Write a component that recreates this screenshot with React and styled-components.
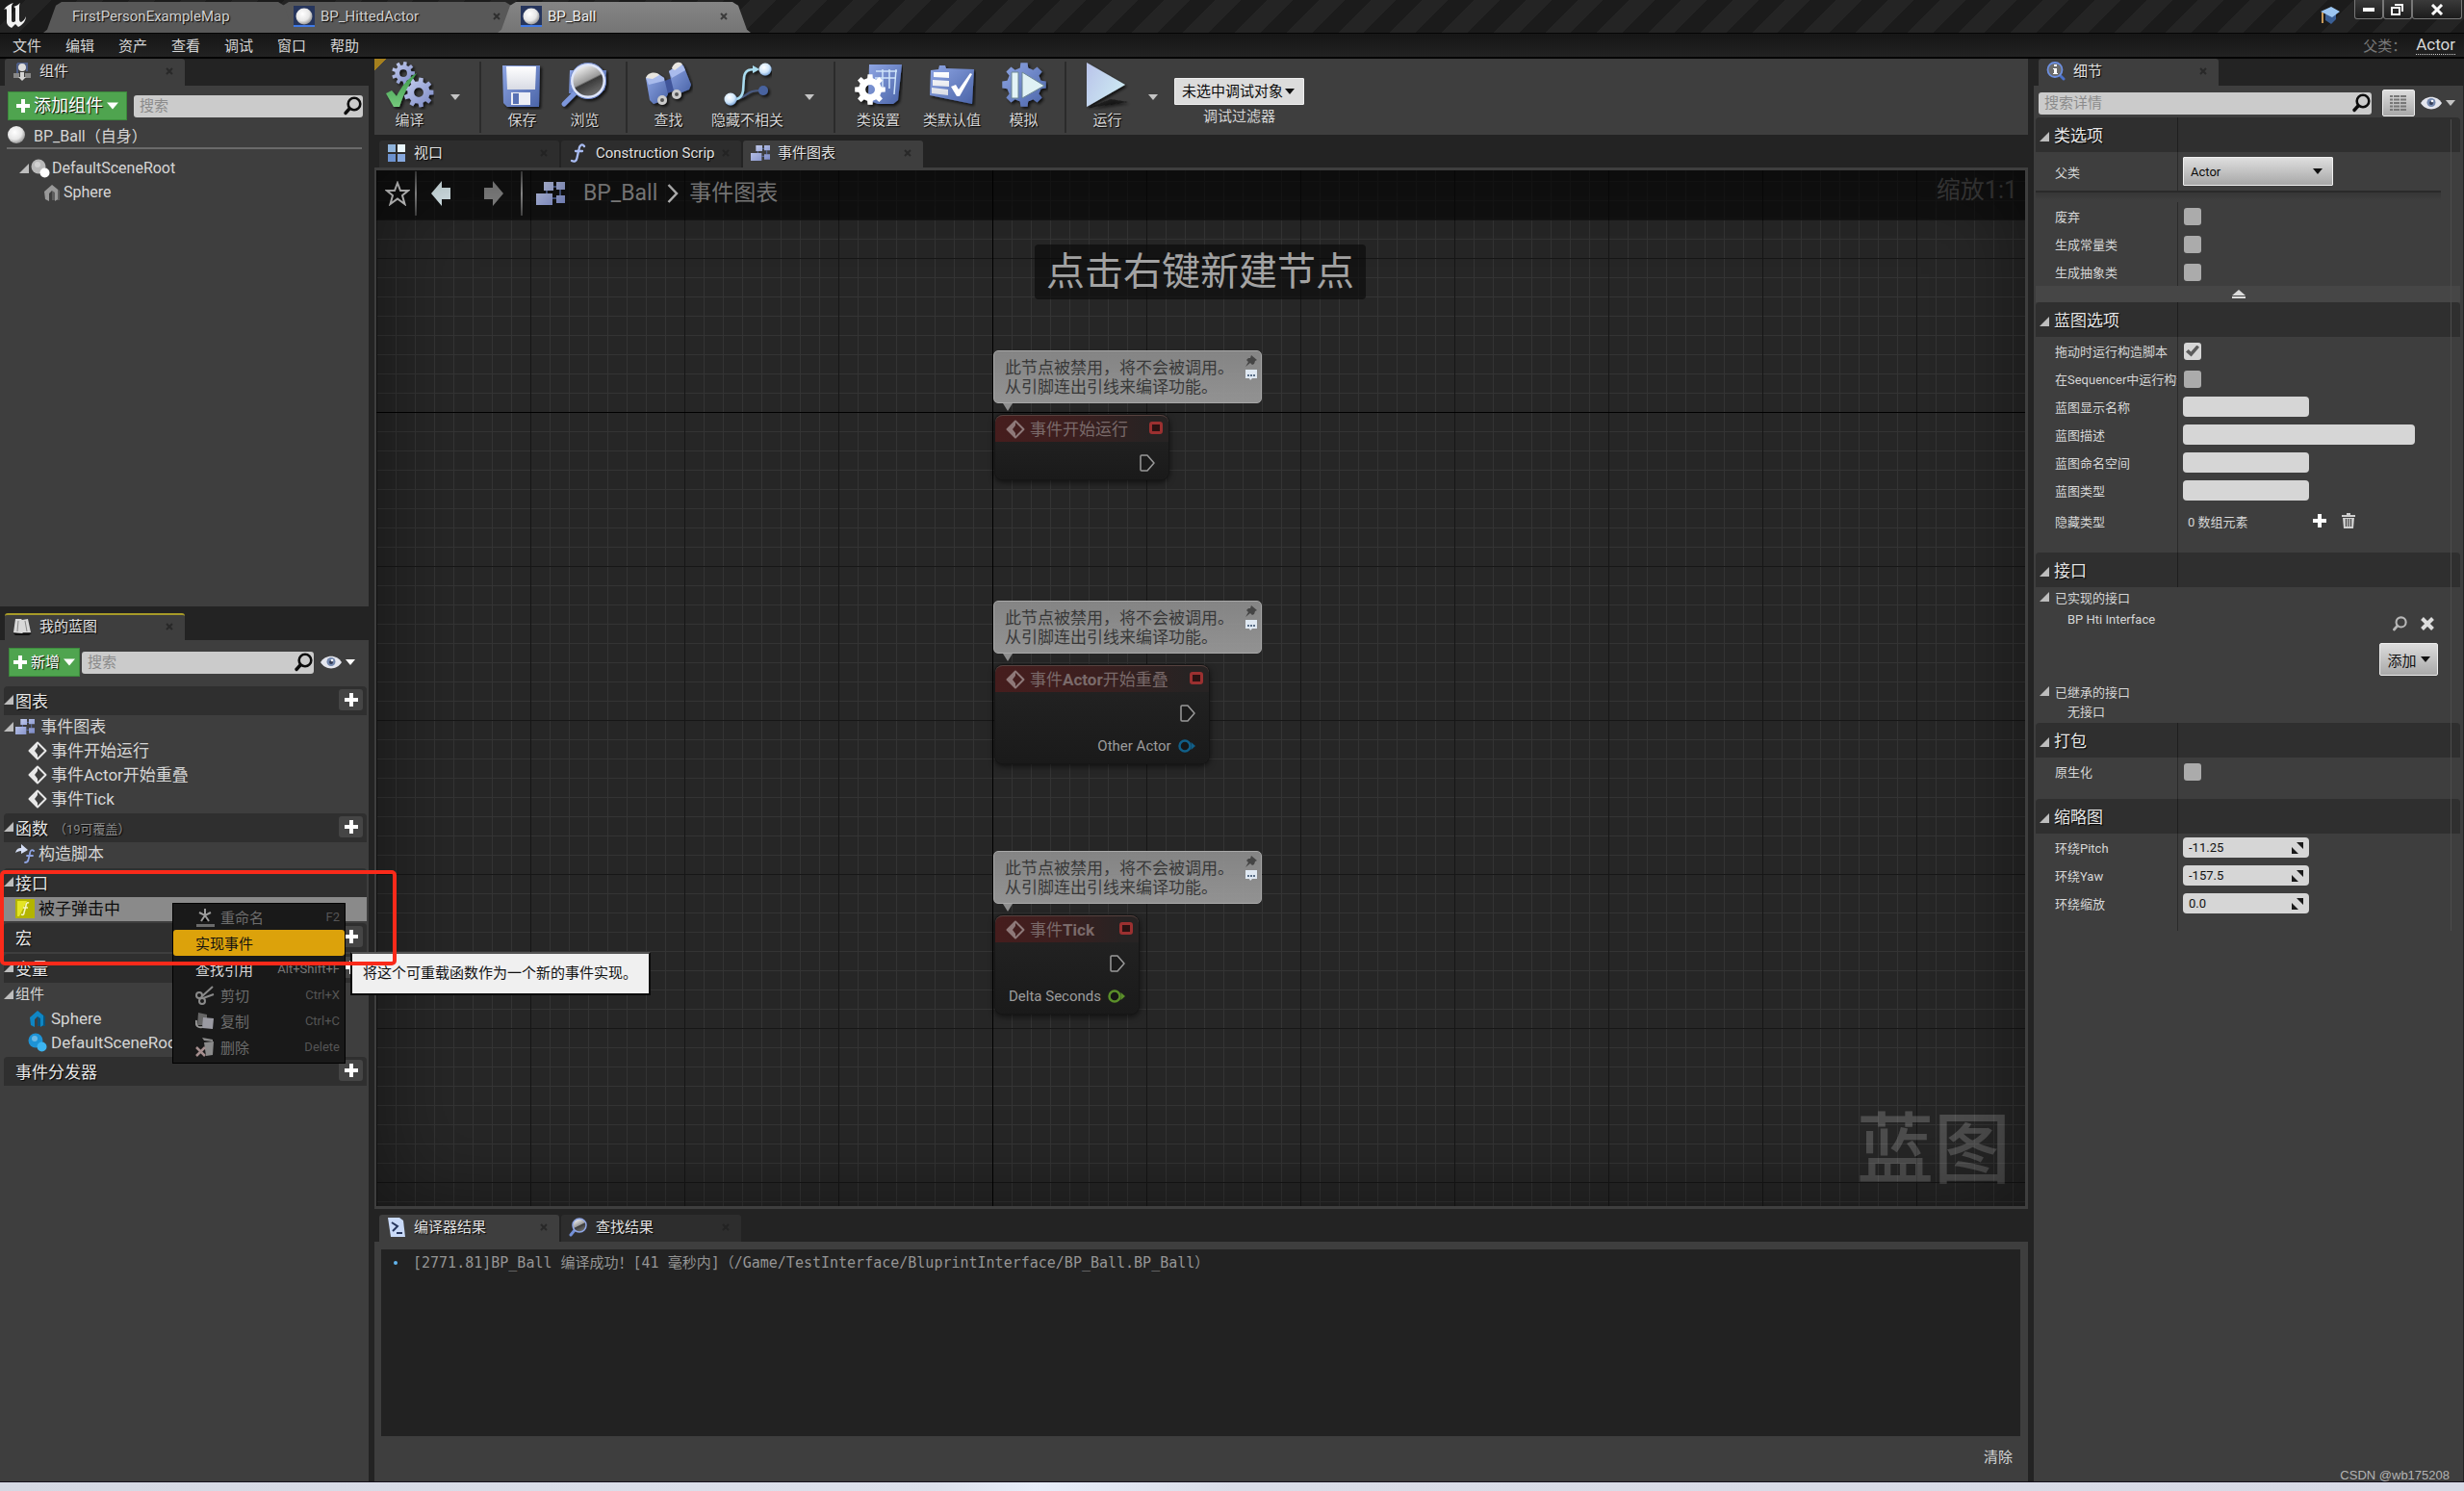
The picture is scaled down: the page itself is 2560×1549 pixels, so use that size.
import React from "react";
import styled, { createGlobalStyle, css } from "styled-components";

const color = {
  gutter: "#232323",
  panel: "#3e3e3e",
  header: "#2f2f2f",
  text: "#d6d6d6",
  muted: "#8c8c8c",
  field: "#cbcbcb",
  green: "#4fa44f",
};
const shadow = "1px 1px 1px #000";

const GlobalStyle = createGlobalStyle`
  * { box-sizing: border-box; }
  body {
    margin: 0;
    background: ${color.gutter};
    color: ${color.text};
    font-family: Roboto, "Noto Sans CJK SC", sans-serif;
    font-size: 15px;
  }
  button, input, select { font: inherit; color: inherit; margin: 0; }
  button { border: 0; padding: 0; background: none; }
  h2, h3, p, ul { margin: 0; padding: 0; font-weight: 400; list-style: none; }
  svg { display: block; flex: none; }
`;

/* ---------- icons ---------- */

const HiddenSvg = styled.svg`
  position: absolute;
`;
const Defs = () => (
  <HiddenSvg width="0" height="0" aria-hidden="true">
    <defs>
      <linearGradient id="steel" x1="0" y1="0" x2="1" y2="1">
        <stop offset="0" stopColor="#c9d2f2" />
        <stop offset="1" stopColor="#7886c2" />
      </linearGradient>
      <linearGradient id="blue" x1="0" y1="0" x2="1" y2="1">
        <stop offset="0" stopColor="#8fa6e4" />
        <stop offset="1" stopColor="#4a64a8" />
      </linearGradient>
      <linearGradient id="ice" x1="0" y1="0" x2="1" y2="0.6">
        <stop offset="0" stopColor="#b9c3ea" />
        <stop offset="1" stopColor="#cdeaf2" />
      </linearGradient>
      <linearGradient id="leaf" x1="0" y1="0" x2="0" y2="1">
        <stop offset="0" stopColor="#3f9a4c" />
        <stop offset="1" stopColor="#74c97c" />
      </linearGradient>
      <linearGradient id="lens" x1="0.2" y1="0" x2="0.7" y2="1">
        <stop offset="0" stopColor="#ffffff" />
        <stop offset="0.5" stopColor="#9a9a9a" />
        <stop offset="0.55" stopColor="#3a3a3a" />
        <stop offset="1" stopColor="#777" />
      </linearGradient>
      <linearGradient id="paper" x1="0" y1="0" x2="0" y2="1">
        <stop offset="0" stopColor="#ffffff" />
        <stop offset="1" stopColor="#d8dbe4" />
      </linearGradient>
      <radialGradient id="ball" cx="0.4" cy="0.35" r="0.7">
        <stop offset="0" stopColor="#ffffff" />
        <stop offset="0.6" stopColor="#e6e6e6" />
        <stop offset="1" stopColor="#8a8a8a" />
      </radialGradient>
      <radialGradient id="node" cx="0.4" cy="0.35" r="0.7">
        <stop offset="0" stopColor="#ffffff" />
        <stop offset="0.6" stopColor="#cfe6fb" />
        <stop offset="1" stopColor="#6f9ad0" />
      </radialGradient>
      <filter id="drop" x="-20%" y="-20%" width="150%" height="150%">
        <feDropShadow dx="2" dy="2" stdDeviation="1.5" floodColor="#000" floodOpacity="0.75" />
      </filter>
    </defs>
  </HiddenSvg>
);

function gearPath(cx, cy, inner, outer, teeth) {
  const step = (Math.PI * 2) / teeth;
  const pts = [];
  for (let i = 0; i < teeth; i += 1) {
    const a = i * step;
    [[-0.3, inner], [-0.2, outer], [0.2, outer], [0.3, inner]].forEach(([k, r]) => {
      pts.push(`${(cx + r * Math.cos(a + k * step)).toFixed(2)} ${(cy + r * Math.sin(a + k * step)).toFixed(2)}`);
    });
  }
  return `M${pts.join("L")}Z`;
}
const ring = (cx, cy, r) => `M${cx - r} ${cy}a${r} ${r} 0 1 0 ${2 * r} 0a${r} ${r} 0 1 0 ${-2 * r} 0Z`;

const Big = ({ children }) => (
  <svg width="50" height="50" viewBox="0 0 50 50" aria-hidden="true"><g filter="url(#drop)">{children}</g></svg>
);

const CompileIcon = () => (
  <Big>
    <path fillRule="evenodd" fill="url(#steel)" d={gearPath(18, 12, 8.5, 12, 9) + ring(18, 12, 4)} />
    <path fillRule="evenodd" fill="url(#steel)" d={gearPath(34, 32, 11.5, 15.5, 9) + ring(34, 32, 5)} />
    <path fill="url(#leaf)" d="M0 33L6 30L11 36C16 26 23 17 32 12C24 23 18 34 14 47L8 47Z" />
  </Big>
);
const SaveIcon = () => (
  <Big>
    <path fill="url(#blue)" d="M4 4H43L42 47H9L5 43Z" />
    <path fill="url(#paper)" d="M8 5H39L38 29H9Z" />
    <path fill="#eceef5" d="M13 32H33V45H13Z" />
    <path fill="#5871b4" d="M15 33H21V44H15Z" />
  </Big>
);
const BrowseIcon = () => (
  <Big>
    <path fill="url(#blue)" d="M9 9H20V33H8ZM40 9H47L45 30H38Z" />
    <path stroke="#7d97dc" strokeWidth="5" strokeLinecap="round" d="M3 44L14 33" />
    <circle cx="28" cy="20" r="17" fill="url(#lens)" stroke="#dfe6fa" strokeWidth="3" />
    <circle cx="28" cy="20" r="18.5" fill="none" stroke="#6f88cc" strokeWidth="1" />
  </Big>
);
const FindIcon = () => (
  <Big>
    <path fill="#3f549a" d="M16 22L28 17L32 30L20 34Z" />
    <path fill="url(#blue)" d="M1 17L14 13L20 17L24 34L20 40L9 44L5 40Z" />
    <path fill="url(#blue)" d="M25 10L37 2L40 4L48 24L46 29L36 33L30 30Z" />
    <path fill="#a9bbec" d="M1 17L14 13L20 17L20 20L4 24ZM25 10L37 2L40 5L42 9L28 17Z" />
    <path fill="#e9e6e0" d="M1 17C3 11 12 10 15 14L8 18ZM28 7C30 0 37 -1 39 3L31 9Z" />
    <circle cx="18" cy="40" r="5" fill="#ccc" /><circle cx="18" cy="40" r="2" fill="#555" />
    <circle cx="33" cy="34" r="5" fill="#ccc" /><circle cx="33" cy="34" r="2" fill="#555" />
  </Big>
);
const HideIcon = () => (
  <Big>
    <path fill="none" stroke="#4a5a80" strokeWidth="2" d="M7 39C27 39 20 29 41 30" />
    <circle cx="41" cy="30" r="5" fill="#48639f" />
    <path fill="none" stroke="#a9dcf0" strokeWidth="2.5" d="M7 39C14 40 19 38 20 30L21 16C22 9 26 8 33 8" />
    <path fill="#a9dcf0" d="M30 4L37 8L30 12Z" />
    <circle cx="43" cy="8" r="6.5" fill="url(#node)" />
    <circle cx="7" cy="39" r="6.5" fill="url(#node)" />
  </Big>
);
const ClassSettingsIcon = () => (
  <Big>
    <path fill="url(#blue)" d="M15 3H49L45 40L40 44H24L14 40Z" />
    <path fill="none" stroke="#cfe4fa" strokeWidth="1.5" d="M22 10H44M21 17H43M29 8V26M36 8V28M43 8L41 34" />
    <path fillRule="evenodd" fill="#fff" d={gearPath(16, 29, 12, 16, 8) + ring(16, 29, 5)} />
  </Big>
);
const ClassDefaultsIcon = () => (
  <Big>
    <path fill="url(#blue)" d="M3 9L11 8L12 4H18L19 7L48 8L46 44L2 35Z" />
    <path fill="url(#paper)" d="M6 11L22 11V17L6 16ZM5 19L22 20V26L5 25ZM4 27L21 29V35L4 33Z" />
    <path fill="#fff" d="M24 26L29 24L32 29L44 12L46 13L33 36L30 36Z" />
  </Big>
);
const SimulateIcon = () => (
  <Big>
    <path fill="url(#blue)" d={gearPath(25, 24, 18, 23, 8)} />
    <path fill="#e3f3f6" stroke="#6d8793" d="M12 11H19V38H12Z" />
    <path fill="#dff1f5" stroke="#6d8793" d="M23 11L46 25L23 38Z" />
  </Big>
);
const PlayIcon = () => (
  <Big>
    <path fill="#111" opacity="0.7" d="M5 48L28 39L46 42Z" />
    <path fill="url(#ice)" d="M3 1L43 24L3 47Z" />
  </Big>
);

const Caret = ({ size = 10, fill = "#c4c4c4" }) => (
  <svg width={size} height={size} viewBox="0 0 10 10" aria-hidden="true"><path fill={fill} d="M0 2H10L5 8Z" /></svg>
);
const Plus = ({ size = 14 }) => (
  <svg width={size} height={size} viewBox="0 0 14 14" aria-hidden="true"><path fill="#fff" d="M5 0H9V5H14V9H9V14H5V9H0V5H5Z" /></svg>
);
const Search = ({ size = 20, fill = "#0c0c0c" }) => (
  <svg width={size} height={size} viewBox="0 0 20 20" aria-hidden="true">
    <circle cx="12" cy="8" r="6.3" fill="none" stroke={fill} strokeWidth="2.6" />
    <path stroke={fill} strokeWidth="3.4" strokeLinecap="round" d="M3 17.5L7 13" />
  </svg>
);
const Eye = () => (
  <svg width="22" height="14" viewBox="0 0 22 14" aria-hidden="true">
    <path fill="#e4e6ee" d="M0 7C5 -1.500 17 -1.500 22 7C17 15.500 5 15.500 0 7Z" />
    <circle cx="11" cy="6.500" r="4.500" fill="#7488ae" /><circle cx="11" cy="7" r="2" fill="#333c55" /><circle cx="12" cy="5" r="1.300" fill="#fff" />
  </svg>
);
const TreeArrow = () => (
  <svg width="10" height="10" viewBox="0 0 10 10" aria-hidden="true"><path fill="#bdbdbd" d="M10 0V10H0Z" /></svg>
);
const CloseX = () => (
  <svg width="8" height="8" viewBox="0 0 8 8" aria-hidden="true"><path stroke="#1f1f1f" strokeWidth="2" opacity="0.7" d="M1 1L7 7M7 1L1 7" /></svg>
);
const GraphIcon = ({ width = 20 }) => (
  <svg width={width} height={Math.round(width * 0.8)} viewBox="0 0 30 24" aria-hidden="true">
    <path stroke="#5b6da5" strokeWidth="1.500" d="M16 5H22M17 17H22M11 9V14M25 8V14" />
    <path fill="url(#steel)" d="M8 0H18V9H8ZM21 0H30V8H21ZM0 12H17V24H0ZM21 14H30V22H21Z" />
  </svg>
);
const EventIcon = ({ size = 20 }) => (
  <svg width={size} height={size} viewBox="0 0 20 20" aria-hidden="true">
    <path fill="none" stroke="#e8e8e8" strokeWidth="2" strokeLinejoin="round" d="M10 1.500L18.500 10L10 18.500L1.500 10Z" />
    <path fill="#e8e8e8" d="M10 1.500V6L7 10L10 14V18.500L1.500 10Z" />
  </svg>
);
const SphereIcon = ({ size = 20 }) => (
  <svg width={size} height={size} viewBox="0 0 20 20" aria-hidden="true"><circle cx="10" cy="10" r="9" fill="url(#ball)" /></svg>
);
const BlueprintTabIcon = () => (
  <svg width="22" height="22" viewBox="0 0 22 22" aria-hidden="true">
    <path fill="#26355c" d="M0 0H22V20H0Z" /><path fill="#3f79e6" d="M0 20H22V22H0Z" /><circle cx="11" cy="11" r="8.500" fill="url(#ball)" />
  </svg>
);
const RootIcon = ({ a = "#b9b9b9", b = "#fff" }) => (
  <svg width="20" height="20" viewBox="0 0 20 20" aria-hidden="true">
    <circle cx="8" cy="8" r="7.500" fill={a} /><circle cx="7" cy="6" r="3" fill="#fff" opacity="0.35" /><circle cx="14.500" cy="14.500" r="5" fill={b} />
  </svg>
);
const MeshIcon = ({ fill = "#999", dark = "#5d5d5d" }) => (
  <svg width="18" height="18" viewBox="0 0 18 18" aria-hidden="true">
    <path fill={dark} d="M9 1L17 7V17H9Z" /><path fill={fill} d="M1 8L9 1L15 6V16L12 18V9L9 7L6 10V18L2 16Z" />
  </svg>
);
const ComponentsIcon = () => (
  <svg width="20" height="20" viewBox="0 0 20 20" aria-hidden="true">
    <path fill="none" stroke="#4d5d86" strokeWidth="2" d="M5 2H15V10M5 2V12" />
    <circle cx="10" cy="6" r="4" fill="#ddd" /><path fill="#888" d="M1 12H7V17H1ZM13 12H19V17H13Z" /><path fill="#d5d5d5" d="M8 11H12V16H14L10 20L6 16H8Z" />
  </svg>
);
const BookIcon = () => (
  <svg width="20" height="20" viewBox="0 0 20 20" aria-hidden="true">
    <path fill="#111" d="M1 17H20L17 19H3Z" /><path fill="#d9d9d9" d="M3 2H9L10 3L16 2L19 16H11L10 17L1 16Z" /><path stroke="#888" d="M6 4L5 15M13 4L15 15" />
  </svg>
);
const ViewportIcon = () => (
  <svg width="20" height="20" viewBox="0 0 20 20" aria-hidden="true">
    <path fill="#8fb4dc" d="M1 1H9V9H1Z" /><path fill="#e9f6fc" d="M11 1H19V9H11Z" /><path fill="#6c92cf" d="M1 11H9V19H1Z" /><path fill="#86a8dd" d="M11 11H19V19H11Z" />
  </svg>
);
const FnIcon = ({ size = 20, stroke = "#a9bcf2" }) => (
  <svg width={size} height={size} viewBox="0 0 20 20" aria-hidden="true">
    <path fill="none" stroke={stroke} strokeWidth="2.300" strokeLinecap="round" d="M16 3C14 0 11 1.500 10.500 6L8.500 15C8 18 6 19.500 3 18M7 8H14" />
  </svg>
);
const ConstructIcon = () => (
  <svg width="20" height="20" viewBox="0 0 20 20" aria-hidden="true">
    <path fill="#d5def4" d="M0 9C1 5 3 4 6 4V0L13 6L6 10V7C3 7 2 8 0 9Z" />
    <path fill="none" stroke="#8ea3e0" strokeWidth="1.800" strokeLinecap="round" d="M19 7C17 5 15 7 15 10L13.500 16C13 19 11 19 10 19M12 12H18" />
  </svg>
);
const InterfaceIcon = () => (
  <svg width="20" height="20" viewBox="0 0 20 20" aria-hidden="true">
    <path fill="#b3b400" d="M0 0H20V20H0Z" /><path fill="#e4e526" d="M2 2H12L4 18H2Z" />
    <path fill="none" stroke="#f7f7c4" strokeWidth="1.600" d="M14 4C12 3 11 5 11 7L9 14C9 16 8 17 6 16M8 9H13" />
  </svg>
);
const ScriptIcon = () => (
  <svg width="20" height="20" viewBox="0 0 20 20" aria-hidden="true">
    <path fill="#c9daf8" d="M1 0H13L17 3L19 20H4Z" /><path fill="none" stroke="#26365e" strokeWidth="2" d="M5 5L11 9L6 14M10 16H16" />
  </svg>
);
const LensIcon = () => (
  <svg width="20" height="20" viewBox="0 0 20 20" aria-hidden="true">
    <path stroke="#7390d8" strokeWidth="3" strokeLinecap="round" d="M2 18L6 13" /><circle cx="11" cy="8" r="7" fill="url(#lens)" stroke="#8fa6e4" strokeWidth="1.500" />
  </svg>
);
const InfoIcon = () => (
  <svg width="20" height="20" viewBox="0 0 20 20" aria-hidden="true">
    <path stroke="#4b70c8" strokeWidth="3" strokeLinecap="round" d="M14 14L18 18" /><circle cx="9" cy="8.500" r="7.500" fill="#6b6b6b" stroke="#6c8fe0" strokeWidth="1.800" />
    <path fill="#fff" d="M8 3H11V5H8ZM7 7H11V12H12V13H7V12H8V8H7Z" />
  </svg>
);
const Logo = () => (
  <svg width="26" height="26" viewBox="0 0 26 26" aria-hidden="true">
    <path fill="#f2f2f2" d="M1 7C4 3 7 1 11 0C9 2 9 3 9 5V18C9 20 11 21 13 19V6C13 5 12 4 11 4C14 3 16 2 18 0C17 2 17 3 17 5V17C17 19 18 20 19 20C21 19 23 17 24 14C24 19 20 23 16 25L13 22L9 26C7 25 4 23 4 20V8C4 6 3 6 1 7Z" />
  </svg>
);
const CapIcon = () => (
  <svg width="20" height="18" viewBox="0 0 20 18" aria-hidden="true">
    <path fill="#3a5f95" d="M5 8V14L11 18L16 13V7Z" /><path fill="#9cc6f2" d="M0 5L11 0L20 5L12 11Z" /><path stroke="#c89a5a" strokeWidth="2" d="M2 6V17" />
  </svg>
);
const StarIcon = () => (
  <svg width="26" height="26" viewBox="0 0 26 26" aria-hidden="true"><path fill="none" stroke="#d8d8d8" strokeWidth="2" d="M13 2L16 10H24L18 15L20.500 24L13 18.500L5.500 24L8 15L2 10H10Z" /></svg>
);
const ChevronIcon = () => (
  <svg width="12" height="20" viewBox="0 0 12 20" aria-hidden="true"><path fill="none" stroke="#c4c4c4" strokeWidth="2.500" d="M1.500 1L10 10L1.500 19" /></svg>
);
const NavArrow = ({ flip, fill }) => (
  <svg width="22" height="28" viewBox="0 0 22 28" aria-hidden="true"><path fill={fill} transform={flip ? "translate(22 0) scale(-1 1)" : undefined} d="M0 14L11 1V8H20V20H11V27Z" /></svg>
);
const ExecPin = () => (
  <svg width="16" height="18" viewBox="0 0 16 18" aria-hidden="true"><path fill="#1a1a1a" stroke="#9a9a9a" strokeWidth="1.500" strokeLinejoin="round" d="M1 2Q1 1 2 1H8L15 9L8 17H2Q1 17 1 16Z" /></svg>
);
const ValuePin = ({ tint }) => (
  <svg width="18" height="14" viewBox="0 0 18 14" aria-hidden="true"><circle cx="7" cy="7" r="5.500" fill="#161616" stroke={tint} strokeWidth="2.500" /><path fill={tint} d="M13.500 3L18 7L13.500 11Z" /></svg>
);
const PushPin = () => (
  <svg width="12" height="12" viewBox="0 0 12 12" aria-hidden="true"><path fill="#454545" d="M6 0L12 5L10 6L9 9L7 10L5 8L0 12L3 7L1 5L3 3H5Z" /></svg>
);
const BubbleIcon = () => (
  <svg width="12" height="12" viewBox="0 0 12 12" aria-hidden="true"><path fill="#dfe8f2" d="M0 1H12V10H7L5 12L4 10H0Z" /><path fill="#5a6f88" d="M2 6H4V8H2ZM5 6H7V8H5ZM8 6H10V8H8Z" /></svg>
);
const TrashIcon = () => (
  <svg width="14" height="16" viewBox="0 0 14 16" aria-hidden="true"><path fill="#cfcfcf" d="M5 0H9V2H14V4H0V2H5ZM1 5H13L12 16H2Z" /><path stroke="#444" strokeWidth="1.200" d="M4.500 6V14M7 6V14M9.500 6V14" /></svg>
);
const RemoveIcon = () => (
  <svg width="14" height="14" viewBox="0 0 14 14" aria-hidden="true"><path stroke="#dcdcdc" strokeWidth="4" d="M1.500 1.500L12.500 12.500M12.500 1.500L1.500 12.500" /></svg>
);
const ListIcon = () => (
  <svg width="18" height="18" viewBox="0 0 18 18" aria-hidden="true"><path fill="none" stroke="#777" strokeWidth="2" strokeDasharray="3 1 6 1 6 1" d="M0 2H18M0 5.500H18M0 9H18M0 12.500H18M0 16H18" /></svg>
);
const SpinIcon = () => (
  <svg width="12" height="12" viewBox="0 0 12 12" aria-hidden="true"><path fill="#1a1a1a" d="M5 0H12V7ZM0 5L7 12H0Z" /><path stroke="#d6d6d6" strokeWidth="2" d="M2 2L10 10" /></svg>
);
const RenameIcon = () => (
  <svg width="20" height="20" viewBox="0 0 20 20" aria-hidden="true"><path stroke="#9b9b9b" strokeWidth="2" d="M10 1V8M4 5L10 8L16 5M6 14L10 8L14 14" /><path fill="#6b6b6b" d="M1 17H20V20H1Z" /></svg>
);
const CutIcon = () => (
  <svg width="20" height="20" viewBox="0 0 20 20" aria-hidden="true"><path fill="none" stroke="#8a8a8a" strokeWidth="2" d="M7 11L18 1M8 13L19 9" /><circle cx="4" cy="10" r="3" fill="none" stroke="#8a8a8a" strokeWidth="2" /><circle cx="7" cy="16" r="3" fill="none" stroke="#8a8a8a" strokeWidth="2" /></svg>
);
const CopyIcon = () => (
  <svg width="20" height="20" viewBox="0 0 20 20" aria-hidden="true"><path fill="#666" d="M3 1L12 3V14H2Z" /><path fill="#9a9aa2" d="M8 6L19 7L18 18L7 17Z" /><path fill="none" stroke="#999" strokeWidth="2" d="M1 9C0 15 3 17 7 16" /></svg>
);
const DeleteIcon = () => (
  <svg width="20" height="20" viewBox="0 0 20 20" aria-hidden="true"><path fill="#8b8b8b" d="M7 0L18 2V4L9 3ZM9 5L19 4L18 18L11 19Z" /><path stroke="#a58e8e" strokeWidth="2.500" d="M1 10L10 19M10 10L1 19" /></svg>
);

/* ---------- window frame ---------- */

const Page = styled.div`
  position: relative;
  display: flex;
  flex-direction: column;
  min-height: 100vh;
  overflow: hidden;
`;
const TitleBar = styled.header`
  display: flex;
  height: 34px;
  padding-left: 3px;
  background: repeating-linear-gradient(135deg, #1b1b1b 0 19px, #242424 19px 38px);
`;
const LogoBox = styled.div`
  width: 42px;
  padding-top: 3px;
`;
const WindowTabs = styled.nav`
  display: flex;
  flex: 1;
  padding-top: 2px;
`;
const WindowTab = styled.button`
  display: flex;
  align-items: center;
  gap: 6px;
  width: 263px;
  padding: 0 24px 2px;
  text-shadow: ${shadow};
  color: ${(p) => (p.$active ? "#f0f0f0" : "#d0d0d0")};
  background: ${(p) => (p.$active ? "linear-gradient(#858585, #757575)" : "#585858")};
  clip-path: polygon(0 100%, 4px 90%, 13px 12%, 19px 0, calc(100% - 19px) 0, calc(100% - 13px) 12%, calc(100% - 4px) 90%, 100% 100%);
  z-index: ${(p) => p.$z};
  & + & { margin-left: -27px; }
  & > span { flex: 1; text-align: left; padding-left: ${(p) => (p.$plain ? "6px" : "0")}; }
`;
const WindowTools = styled.div`
  display: flex;
  gap: 15px;
  padding-right: 2px;
  & > svg { margin-top: 7px; }
`;
const WindowButtons = styled.div`
  display: flex;
  height: 20px;
`;
const WindowButton = styled.button`
  display: grid;
  place-items: center;
  width: ${(p) => (p.$wide ? 52 : 30)}px;
  border: 1px solid #777;
  border-top: 0;
  border-radius: 0 0 3px 3px;
  background: linear-gradient(#3a3a3a, #1c1c1c);
`;
const MenuBar = styled.nav`
  display: flex;
  align-items: center;
  height: 27px;
  padding: 0 9px 2px 13px;
  gap: 25px;
  border: solid #050505;
  border-width: 1px 0 2px;
  background: linear-gradient(#161616, #222);
`;
const ParentClass = styled.div`
  display: flex;
  gap: 10px;
  margin-left: auto;
  color: #777;
  a { color: #d8d8d8; font-size: 17px; line-height: 20px; text-decoration: none; border-bottom: 1px dotted #ccc; }
`;
const Workspace = styled.main`
  display: grid;
  grid-template-columns: 383px minmax(0, 1fr) 446px;
  column-gap: 6px;
  flex: 1;
  padding-right: 1px;
`;
const Column = styled.div`
  display: flex;
  flex-direction: column;
  min-width: 0;
`;
const Desktop = styled.div`
  height: 10px;
  border-top: 1px solid #15101c;
  background: linear-gradient(90deg, #d5d8e3, #dde1ec 38%, #e8eefa 42%, #dadde8 50%, #d8dae6);
`;

/* ---------- docked tabs and panels ---------- */

const TabStrip = styled.div`
  display: flex;
  gap: 2px;
  height: 28px;
  padding-left: 5px;
  margin-top: ${(p) => p.$gap || 0}px;
`;
const DockTab = styled.button`
  display: flex;
  align-items: center;
  gap: 8px;
  width: 187px;
  padding: 0 12px 2px 8px;
  border-radius: 3px 3px 0 0;
  text-shadow: ${shadow};
  color: #e2e2e2;
  background: ${(p) => (p.$active ? color.panel : "#2d2d2d")};
  ${(p) => p.$focus && css`border-top: 2px solid #a79a28;`}
  & > span { flex: 1; min-width: 0; overflow: hidden; white-space: nowrap; text-align: left; line-height: 22px; }
`;
const Tab = ({ icon, label, ...rest }) => (
  <DockTab {...rest}>{icon}<span>{label}</span><CloseX /></DockTab>
);
const Panel = styled.section`
  display: flex;
  flex-direction: column;
  flex: ${(p) => p.$grow || 1} 1 0;
  background: ${color.panel};
`;
const SearchRow = styled.div`
  display: flex;
  align-items: center;
  gap: ${(p) => p.$gap || 7}px;
  padding: ${(p) => p.$pad};
`;
const GreenButton = styled.button`
  display: flex;
  align-items: center;
  gap: 4px;
  height: 30px;
  padding: 0 ${(p) => p.$pad}px;
  color: #fff;
  font-size: ${(p) => p.$size}px;
  line-height: 26px;
  text-shadow: ${shadow};
  border: 1px solid #3c8a3c;
  background: ${color.green};
  white-space: nowrap;
`;
const SearchBox = styled.label`
  display: flex;
  align-items: center;
  flex: 1;
  height: 23px;
  padding: 0 1px 0 6px;
  border-radius: 3px;
  background: ${color.field};
  input {
    flex: 1; min-width: 0; height: 21px; padding: 0; border: 0; background: none; outline: 0; color: #222;
  }
  input::placeholder { color: #8b8b8b; opacity: 1; }
`;
const EyeButton = styled.button`
  display: flex;
  align-items: center;
  gap: 4px;
  margin-left: ${(p) => p.$left || 0}px;
`;
const SelfRow = styled.div`
  display: flex;
  align-items: center;
  gap: 8px;
  height: 28px;
  margin: 0 7px;
  font-size: 16px;
  border-bottom: 2px solid #6a6a6a;
`;
const Tree = styled.ul`
  padding-top: ${(p) => p.$top || 0}px;
`;
const TreeItem = styled.li`
  display: flex;
  align-items: center;
  gap: ${(p) => p.$gap || 4}px;
  height: 25px;
  padding: 0 0 2px ${(p) => p.$indent}px;
  font-size: ${(p) => p.$size || 17}px;
  line-height: 22px;
  white-space: nowrap;
  ${(p) => p.$selected && css`background: #8a8a8a; color: #0c0c0c;`}
`;
const Section = styled.section`
  margin: 0 2px 2px 4px;
`;
const SectionHead = styled.h3`
  display: flex;
  align-items: center;
  gap: 2px;
  height: 30px;
  padding: 0 4px 2px ${(p) => (p.$leaf ? 12 : 0)}px;
  font-size: 17px;
  color: #e8e8e8;
  text-shadow: ${shadow};
  border-radius: 4px 4px 0 0;
  background: ${color.header};
  small { flex: 1; padding: 2px 0 0 4px; font-size: 13px; color: ${color.muted}; }
`;
const AddButton = styled.button`
  display: grid;
  place-items: center;
  width: 25px;
  height: 22px;
  margin-left: auto;
  border-radius: 3px;
  background: #454545;
`;
const Head = ({ label, note, leaf, add = true }) => (
  <SectionHead $leaf={leaf}>
    {!leaf && <TreeArrow />}{label}
    {note && <small>{note}</small>}
    {add && <AddButton aria-label={`${label} +`}><Plus /></AddButton>}
  </SectionHead>
);

/* ---------- toolbar ---------- */

const Toolbar = styled.div`
  display: flex;
  height: 79px;
  padding: 3px 0 0 4px;
  background: linear-gradient(135deg, #a5801e 0 9px, transparent 9px), ${color.panel};
`;
const ToolButton = styled.button`
  display: flex;
  flex-direction: column;
  align-items: center;
  min-width: 65px;
  padding: 0 12px;
  line-height: 22px;
  white-space: nowrap;
  text-shadow: ${shadow};
  svg { margin: 0 -6px; }
`;
const ToolMenu = styled.button`
  display: grid;
  place-items: center;
  width: 30px;
  height: 73px;
`;
const Divider = styled.span`
  width: 2px;
  height: 74px;
  margin: 0 10px;
  background: #2b2b2b;
`;
const DebugFilter = styled.label`
  display: flex;
  flex-direction: column;
  align-items: center;
  margin: 17px 0 0 7px;
  line-height: 24px;
`;
const SelectWrap = styled.span`
  position: relative;
  display: block;
  width: ${(p) => p.$width}px;
  svg { position: absolute; right: ${(p) => p.$right}px; top: calc(50% - 5px); pointer-events: none; }
`;
const Select = styled.select`
  appearance: none;
  width: 100%;
  height: ${(p) => p.$height}px;
  padding: 0 8px 0 7px;
  color: #0a0a0a;
  font-size: ${(p) => p.$size || 15}px;
  border: 1px solid #efefef;
  border-radius: 1px;
  background: ${(p) => (p.$flat ? "#dcdcdc" : "linear-gradient(#dedede, #a8a8a8)")};
`;
const Tool = ({ icon, label }) => <ToolButton>{icon}<span>{label}</span></ToolButton>;
const DownMenu = ({ label }) => <ToolMenu aria-label={label}><Caret /></ToolMenu>;

/* ---------- graph ---------- */

const GraphFrame = styled.section`
  display: flex;
  flex: 1;
  padding: 3px 3px 3px 2px;
  background: ${color.panel};
`;
const Canvas = styled.div`
  position: relative;
  flex: 1;
  overflow: hidden;
  background:
    linear-gradient(#000, #000) 640px 0 / 1px 100% no-repeat,
    linear-gradient(#000, #000) 0 251px / 100% 1px no-repeat,
    linear-gradient(to right, #161616 1px, transparent 1px) 0 0 / 160px 160px,
    linear-gradient(#161616 1px, transparent 1px) 0 91px / 160px 160px,
    linear-gradient(to right, #343434 1px, transparent 1px) 0 0 / 20px 20px,
    linear-gradient(#343434 1px, transparent 1px) 0 11px / 20px 20px,
    #262626;
  &::after {
    content: "";
    position: absolute;
    inset: 0;
    pointer-events: none;
    box-shadow: inset 0 0 90px rgba(0, 0, 0, 0.45);
  }
`;
const Breadcrumb = styled.div`
  display: flex;
  align-items: center;
  height: 52px;
  padding: 0 0 4px 9px;
  font-size: 23px;
  line-height: 32px;
  color: #858585;
  background: rgba(0, 0, 0, 0.55);
  button { display: grid; place-items: center; }
`;
const BarLine = styled.span`
  width: 2px;
  height: 46px;
  margin: 0 ${(p) => p.$right}px 0 ${(p) => p.$left}px;
  background: linear-gradient(#444, #999, #444);
`;
const CrumbGraph = styled.span`
  padding: 0 19px 0 14px;
`;
const Chevron = styled.span`
  padding: 0 11px 0 10px;
`;
const ForwardGap = styled.span`
  width: 31px;
`;
const ZoomLabel = styled.span`
  margin-left: auto;
  padding: 0 8px 6px 0;
  font-size: 25px;
  color: #3c3c3c;
`;
const Hint = styled.p`
  position: absolute;
  top: 77px;
  left: 684px;
  height: 57px;
  padding: 0 12px;
  line-height: 58px;
  font-size: 40px;
  color: #a3a3a3;
  border-radius: 4px;
  background: rgba(10, 10, 10, 0.65);
  white-space: nowrap;
`;
const Watermark = styled.p`
  position: absolute;
  right: 15px;
  bottom: 14px;
  font-size: 80px;
  line-height: 88px;
  font-weight: 500;
  color: rgba(255, 255, 255, 0.19);
`;
const NodeGroup = styled.div`
  position: absolute;
  left: 641px;
  top: ${(p) => p.$top}px;
  display: flex;
  flex-direction: column;
  align-items: flex-start;
  gap: 12px;
`;
const Comment = styled.div`
  position: relative;
  display: flex;
  justify-content: space-between;
  width: 279px;
  height: 55px;
  padding: 7px 4px 0 11px;
  font-size: 17px;
  line-height: 20px;
  color: #383838;
  border: 1px solid #a8a8a8;
  border-radius: 5px;
  background: linear-gradient(rgba(140, 140, 140, 0.92), rgba(155, 155, 155, 0.92));
  white-space: nowrap;
  &::after {
    content: "";
    position: absolute;
    left: 9px;
    top: 54px;
    border: 5px solid transparent;
    border-top: 8px solid #8e8e8e;
  }
`;
const CommentIcons = styled.span`
  display: flex;
  flex-direction: column;
  gap: 2px;
  margin-top: -3px;
`;
const NodeCard = styled.article`
  margin-left: 2px;
  border-radius: 8px;
  background: linear-gradient(#242424, #1a1a1a);
  box-shadow: 0 0 0 1px #161616, 0 2px 6px 1px rgba(0, 0, 0, 0.6);
`;
const NodeHead = styled.div`
  display: flex;
  align-items: center;
  height: 28px;
  padding: 0 6px 0 11px;
  font-size: 17px;
  color: #7a6a6a;
  border-top: 1px solid #57423f;
  border-radius: 8px 8px 0 0;
  background: linear-gradient(90deg, #461d1d, #3c1f1f 45%, #272323 90%);
  white-space: nowrap;
  & > svg { opacity: 0.45; }
  b { font-weight: 700; }
`;
const NodeTitle = styled.span`
  flex: 1;
  padding: 0 22px 2px 5px;
`;
const Delegate = styled.i`
  width: 14px;
  height: 13px;
  margin-top: -3px;
  border: 3px solid #9b3030;
  border-radius: 3px;
  background: #2a1212;
`;
const Pins = styled.div`
  display: flex;
  flex-direction: column;
  align-items: flex-end;
  gap: 15px;
  padding: 13px 14px 8px;
  font-size: 15px;
  line-height: 20px;
  color: #9c9c9c;
`;
const Pin = styled.div`
  display: flex;
  align-items: center;
  gap: 7px;
`;
const EventNode = ({ top, title, pin, tint }) => (
  <NodeGroup $top={top}>
    <Comment>
      <p>此节点被禁用，将不会被调用。<br />从引脚连出引线来编译功能。</p>
      <CommentIcons><PushPin /><BubbleIcon /></CommentIcons>
    </Comment>
    <NodeCard>
      <NodeHead><EventIcon /><NodeTitle>{title}</NodeTitle><Delegate /></NodeHead>
      <Pins>
        <ExecPin />
        {pin && <Pin>{pin}<ValuePin tint={tint} /></Pin>}
      </Pins>
    </NodeCard>
  </NodeGroup>
);

/* ---------- results ---------- */

const Results = styled.section`
  display: flex;
  flex-direction: column;
  height: 249px;
  padding: 8px 8px 0 7px;
  background: ${color.panel};
`;
const Log = styled.div`
  flex: 1;
  display: flex;
  gap: 16px;
  padding: 4px 0 0 13px;
  font-family: "DejaVu Sans Mono", "Noto Sans CJK SC", monospace;
  font-size: 15px;
  line-height: 20px;
  color: #959595;
  background: #222;
`;
const Bullet = styled.i`
  width: 4px;
  height: 4px;
  margin: 8px 0;
  border-radius: 50%;
  background: #62b5ee;
`;
const ResultsFooter = styled.div`
  display: flex;
  justify-content: flex-end;
  height: 47px;
  padding: 0 8px 6px 0;
`;

/* ---------- details ---------- */

const DetailsBody = styled.div`
  position: relative;
  padding: 0 3px 0 2px;
  &::after {
    content: "";
    position: absolute;
    top: 2px;
    bottom: 0;
    right: 12px;
    width: 1px;
    background: #4c4c4c;
  }
`;
const Category = styled.h3`
  display: grid;
  grid-template-columns: 148px 1fr;
  height: 36px;
  font-size: 17px;
  color: #e6e6e6;
  text-shadow: ${shadow};
  border-radius: 4px 4px 0 0;
  background: ${color.header};
  span { display: flex; align-items: center; gap: 5px; padding: 0 0 2px 4px; border-right: 1px solid #1e1e1e; }
  svg { margin-top: 5px; }
`;
const Field = styled.label`
  display: grid;
  grid-template-columns: 148px 1fr;
  height: ${(p) => p.$height || 29}px;
  font-size: 13px;
  white-space: nowrap;
`;
const FieldName = styled.span`
  display: flex;
  align-items: center;
  padding-left: 20px;
  overflow: hidden;
  border-right: 1px solid #2a2a2a;
`;
const FieldValue = styled.span`
  display: flex;
  align-items: center;
  padding-left: 5px;
`;
const Check = styled.input.attrs({ type: "checkbox" })`
  appearance: none;
  width: 18px;
  height: 18px;
  margin-left: 1px;
  border-radius: 3px;
  background: #ababab;
  &:checked { background: #d6d6d6; }
  &:checked::before {
    content: "";
    display: block;
    width: 14px;
    height: 12px;
    margin: 3px 2px;
    background: #5c5c5c;
    clip-path: polygon(0 58%, 20% 38%, 38% 58%, 82% 0, 100% 18%, 40% 100%);
  }
`;
const TextInput = styled.input`
  width: ${(p) => p.$width || 131}px;
  height: 21px;
  padding: 0 22px 0 6px;
  border: 0;
  border-radius: 4px;
  color: #111;
  background: #d6d6d6;
`;
const Spin = styled.span`
  position: relative;
  display: flex;
  svg { position: absolute; right: 6px; top: 5px; }
`;
const Spacer = styled.div`
  width: 148px;
  height: ${(p) => p.$height}px;
  border-right: 1px solid #2a2a2a;
`;
const Rule = styled.div`
  height: 12px;
  margin-right: 20px;
  border-top: 2px solid #2a2a2a;
  background: linear-gradient(#363636, ${color.panel} 8px);
`;
const Collapse = styled.button`
  display: grid;
  place-items: center;
  width: 100%;
  height: 17px;
  padding-right: 20px;
  background: #464646;
`;
const ArrayText = styled.span`
  width: 135px;
  padding-left: 5px;
`;
const ArrayTools = styled.span`
  display: flex;
  gap: 16px;
  align-items: center;
`;
const SubHead = styled.h3`
  display: flex;
  align-items: center;
  gap: 6px;
  height: 20px;
  padding-left: 4px;
  font-size: 13px;
`;
const SubRow = styled.div`
  display: flex;
  align-items: center;
  height: ${(p) => p.$height}px;
  padding: 0 27px 2px 33px;
  font-size: 13px;
`;
const RowTools = styled.span`
  display: flex;
  align-items: center;
  gap: 14px;
  margin-left: auto;
  padding-top: 10px;
`;
const AddRow = styled.div`
  display: flex;
  justify-content: flex-end;
  height: 50px;
  padding: 10px 23px 6px 0;
`;
const LightButton = styled.button`
  display: flex;
  align-items: center;
  justify-content: center;
  gap: 4px;
  width: ${(p) => p.$width}px;
  height: ${(p) => p.$height}px;
  margin-left: ${(p) => p.$left || 0}px;
  color: #111;
  border: 1px solid #ededed;
  border-radius: 2px;
  background: linear-gradient(#dcdcdc, #a9a9a9);
`;

const Cat = ({ label }) => <Category><span><TreeArrow />{label}</span></Category>;
const Row = ({ label, height, children }) => (
  <Field $height={height}><FieldName>{label}</FieldName><FieldValue>{children}</FieldValue></Field>
);
const CheckRow = ({ label, checked, height }) => <Row label={label} height={height}><Check defaultChecked={checked} /></Row>;
const SpinRow = ({ label, value }) => <Row label={label}><Spin><TextInput defaultValue={value} /><SpinIcon /></Spin></Row>;

/* ---------- overlays ---------- */

const ContextMenu = styled.div`
  position: absolute;
  left: 179px;
  top: 938px;
  width: 180px;
  padding-bottom: 3px;
  border: 1px solid #000;
  background: #191919;
`;
const MenuItem = styled.button`
  display: flex;
  align-items: center;
  gap: 6px;
  width: 100%;
  height: 27px;
  padding: 0 5px 0 23px;
  color: ${(p) => (p.$hot ? "#111" : p.$on ? "#d8d8d8" : "#6d6d6d")};
  white-space: nowrap;
  ${(p) => p.$hot && css`background: #dca20b; border-radius: 3px;`}
  small { margin-left: auto; font-size: 13px; color: ${(p) => (p.$on ? "#777" : "#555")}; }
`;
const Tooltip = styled.div`
  position: absolute;
  left: 364px;
  top: 989px;
  height: 45px;
  padding: 0 12px 0 11px;
  line-height: 40px;
  color: #111;
  border: 2px solid #0a0a0a;
  border-top-color: #555;
  background: #f0f0f0;
  white-space: nowrap;
`;
const Annotation = styled.div`
  position: absolute;
  left: 0;
  top: 904px;
  width: 412px;
  height: 99px;
  border: 4px solid #fa2a1a;
  border-radius: 5px;
  pointer-events: none;
`;
const Credit = styled.p`
  position: absolute;
  right: 15px;
  bottom: 6px;
  font: 13px/20px "Liberation Sans", sans-serif;
  color: #b4b4b4;
`;

export default function App() {
  return (
    <Page>
      <GlobalStyle />
      <Defs />
      <TitleBar>
        <LogoBox><Logo /></LogoBox>
        <WindowTabs>
          <WindowTab $z={2} $plain><span>FirstPersonExampleMap</span></WindowTab>
          <WindowTab $z={1}><BlueprintTabIcon /><span>BP_HittedActor</span><CloseX /></WindowTab>
          <WindowTab $z={3} $active><BlueprintTabIcon /><span>BP_Ball</span><CloseX /></WindowTab>
        </WindowTabs>
        <WindowTools>
          <CapIcon />
          <WindowButtons>
            <WindowButton aria-label="最小化"><svg width="12" height="4"><path fill="#fff" d="M0 0H12V4H0Z" /></svg></WindowButton>
            <WindowButton aria-label="还原"><svg width="14" height="14"><path fill="none" stroke="#fff" strokeWidth="2" d="M4 2H12V9M1 5H9V12H1Z" /></svg></WindowButton>
            <WindowButton $wide aria-label="关闭"><svg width="14" height="12"><path stroke="#fff" strokeWidth="3" d="M2 1L12 11M12 1L2 11" /></svg></WindowButton>
          </WindowButtons>
        </WindowTools>
      </TitleBar>
      <MenuBar>
        {["文件", "编辑", "资产", "查看", "调试", "窗口", "帮助"].map((m) => <button key={m}>{m}</button>)}
        <ParentClass><span>父类：</span><a href="#actor">Actor</a></ParentClass>
      </MenuBar>

      <Workspace>
        <Column>
          <TabStrip><Tab $active icon={<ComponentsIcon />} label="组件" /></TabStrip>
          <Panel $grow={541}>
            <SearchRow $pad="6px 6px 2px 8px">
              <GreenButton $size={18} $pad={8}><Plus />添加组件<Caret size={12} fill="#fff" /></GreenButton>
              <SearchBox><input placeholder="搜索" aria-label="搜索组件" /><Search /></SearchBox>
            </SearchRow>
            <SelfRow><SphereIcon />BP_Ball（自身）</SelfRow>
            <Tree $top={8}>
              <TreeItem $indent={20} $gap={2} $size={16}><TreeArrow /><RootIcon />DefaultSceneRoot</TreeItem>
              <TreeItem $indent={45} $gap={3} $size={16}><MeshIcon />Sphere</TreeItem>
            </Tree>
          </Panel>

          <TabStrip $gap={7}><Tab $active $focus icon={<BookIcon />} label="我的蓝图" /></TabStrip>
          <Panel $grow={873}>
            <SearchRow $pad="8px 14px 10px 9px" $gap={2}>
              <GreenButton $size={15} $pad={4}><Plus />新增<Caret size={12} fill="#fff" /></GreenButton>
              <SearchBox><input placeholder="搜索" aria-label="搜索蓝图" /><Search /></SearchBox>
              <EyeButton $left={5} aria-label="视图选项"><Eye /><Caret fill="#fff" /></EyeButton>
            </SearchRow>
            <Section>
              <Head label="图表" />
              <Tree>
                <TreeItem $indent={0} $gap={2}><TreeArrow /><GraphIcon />&nbsp;事件图表</TreeItem>
                <TreeItem $indent={25}><EventIcon />事件开始运行</TreeItem>
                <TreeItem $indent={25}><EventIcon />事件Actor开始重叠</TreeItem>
                <TreeItem $indent={25}><EventIcon />事件Tick</TreeItem>
              </Tree>
            </Section>
            <Section>
              <Head label="函数" note="（19可覆盖）" />
              <Tree><TreeItem $indent={12}><ConstructIcon />构造脚本</TreeItem></Tree>
            </Section>
            <Section>
              <Head label="接口" add={false} />
              <Tree><TreeItem $indent={12} $selected><InterfaceIcon />被子弹击中</TreeItem></Tree>
            </Section>
            <Section><Head label="宏" leaf /></Section>
            <Section>
              <Head label="变量" />
              <Tree>
                <TreeItem $indent={0} $gap={2} $size={15}><TreeArrow />组件</TreeItem>
                <TreeItem $indent={26} $gap={5}><MeshIcon fill="#0f86c4" dark="#0a527a" />Sphere</TreeItem>
                <TreeItem $indent={25}><RootIcon a="#1d93d6" b="#3cb4f0" />DefaultSceneRoot</TreeItem>
              </Tree>
            </Section>
            <Section><Head label="事件分发器" leaf /></Section>
          </Panel>
        </Column>

        <Column>
          <Toolbar>
            <Tool icon={<CompileIcon />} label="编译" /><DownMenu label="编译选项" />
            <Divider />
            <Tool icon={<SaveIcon />} label="保存" /><Tool icon={<BrowseIcon />} label="浏览" />
            <Divider />
            <Tool icon={<FindIcon />} label="查找" /><Tool icon={<HideIcon />} label="隐藏不相关" /><DownMenu label="隐藏选项" />
            <Divider />
            <Tool icon={<ClassSettingsIcon />} label="类设置" /><Tool icon={<ClassDefaultsIcon />} label="类默认值" /><Tool icon={<SimulateIcon />} label="模拟" />
            <Divider />
            <Tool icon={<PlayIcon />} label="运行" /><DownMenu label="运行选项" />
            <DebugFilter>
              <SelectWrap $width={135} $right={10}>
                <Select $flat $height={28}><option>未选中调试对象</option></Select><Caret fill="#111" />
              </SelectWrap>
              调试过滤器
            </DebugFilter>
          </Toolbar>
          <TabStrip $gap={6}>
            <Tab icon={<ViewportIcon />} label="视口" />
            <Tab icon={<FnIcon />} label="Construction Script" />
            <Tab $active icon={<GraphIcon />} label="事件图表" />
          </TabStrip>
          <GraphFrame>
            <Canvas>
              <Breadcrumb>
                <button aria-label="收藏"><StarIcon /></button>
                <BarLine $left={5} $right={15} />
                <button aria-label="后退"><NavArrow fill="#e2f3f7" /></button>
                <ForwardGap />
                <button aria-label="前进"><NavArrow flip fill="#858585" /></button>
                <BarLine $left={18} $right={0} />
                <CrumbGraph><GraphIcon width={30} /></CrumbGraph>
                BP_Ball<Chevron><ChevronIcon /></Chevron>事件图表
                <ZoomLabel>缩放1:1</ZoomLabel>
              </Breadcrumb>
              <Hint>点击右键新建节点</Hint>
              <EventNode top={187} title="事件开始运行" />
              <EventNode top={447} title={<>事件<b>Actor</b>开始重叠</>} pin="Other Actor" tint="#115f88" />
              <EventNode top={707} title={<>事件<b>Tick</b></>} pin="Delta Seconds" tint="#5b8f2a" />
              <Watermark>蓝图</Watermark>
            </Canvas>
          </GraphFrame>
          <TabStrip $gap={6}>
            <Tab $active icon={<ScriptIcon />} label="编译器结果" />
            <Tab icon={<LensIcon />} label="查找结果" />
          </TabStrip>
          <Results>
            <Log><Bullet />[2771.81]BP_Ball 编译成功！[41 毫秒内]（/Game/TestInterface/BluprintInterface/BP_Ball.BP_Ball）</Log>
            <ResultsFooter><button>清除</button></ResultsFooter>
          </Results>
        </Column>

        <Column>
          <TabStrip><Tab $active icon={<InfoIcon />} label="细节" /></TabStrip>
          <Panel>
            <SearchRow $pad="4px 8px 1px 5px" $gap={6}>
              <SearchBox><input placeholder="搜索详情" aria-label="搜索详情" /><Search /></SearchBox>
              <LightButton $width={34} $height={28} $left={5} aria-label="属性矩阵"><ListIcon /></LightButton>
              <EyeButton aria-label="视图选项"><Eye /><Caret /></EyeButton>
            </SearchRow>
            <DetailsBody>
              <Cat label="类选项" />
              <Row label="父类" height={40}>
                <SelectWrap $width={156} $right={11}>
                  <Select $height={30} $size={13}><option>Actor</option></Select><Caret fill="#111" />
                </SelectWrap>
              </Row>
              <Rule />
              <CheckRow label="废弃" />
              <CheckRow label="生成常量类" />
              <CheckRow label="生成抽象类" />
              <Collapse aria-label="收起"><svg width="14" height="9"><path fill="#dcdcdc" d="M7 0L14 6H0ZM0 7H14V9H0Z" /></svg></Collapse>
              <Cat label="蓝图选项" />
              <CheckRow label="拖动时运行构造脚本" checked />
              <CheckRow label="在Sequencer中运行构造脚本" />
              <Row label="蓝图显示名称"><TextInput /></Row>
              <Row label="蓝图描述"><TextInput $width={241} /></Row>
              <Row label="蓝图命名空间"><TextInput /></Row>
              <Row label="蓝图类型"><TextInput /></Row>
              <Field as="div" $height={34}>
                <FieldName>隐藏类型</FieldName>
                <FieldValue>
                  <ArrayText>0 数组元素</ArrayText>
                  <ArrayTools>
                    <button aria-label="添加元素"><Plus /></button>
                    <button aria-label="清空"><TrashIcon /></button>
                  </ArrayTools>
                </FieldValue>
              </Field>
              <Spacer $height={16} />
              <Cat label="接口" />
              <SubHead><TreeArrow />已实现的接口</SubHead>
              <SubRow $height={28}>
                BP Hti Interface
                <RowTools>
                  <button aria-label="浏览接口"><Search size={16} fill="#b8b8b8" /></button>
                  <button aria-label="移除接口"><RemoveIcon /></button>
                </RowTools>
              </SubRow>
              <AddRow><LightButton $width={61} $height={34}>添加<Caret fill="#111" /></LightButton></AddRow>
              <SubHead><TreeArrow />已继承的接口</SubHead>
              <SubRow $height={23}>无接口</SubRow>
              <Cat label="打包" />
              <CheckRow label="原生化" />
              <Spacer $height={14} />
              <Cat label="缩略图" />
              <SpinRow label="环绕Pitch" value="-11.25" />
              <SpinRow label="环绕Yaw" value="-157.5" />
              <SpinRow label="环绕缩放" value="0.0" />
              <Spacer $height={14} />
            </DetailsBody>
          </Panel>
        </Column>
      </Workspace>
      <Desktop />

      <ContextMenu role="menu">
        <MenuItem><RenameIcon />重命名<small>F2</small></MenuItem>
        <MenuItem $hot>实现事件</MenuItem>
        <MenuItem $on>查找引用<small>Alt+Shift+F</small></MenuItem>
        <MenuItem><CutIcon />剪切<small>Ctrl+X</small></MenuItem>
        <MenuItem><CopyIcon />复制<small>Ctrl+C</small></MenuItem>
        <MenuItem><DeleteIcon />删除<small>Delete</small></MenuItem>
      </ContextMenu>
      <Tooltip role="tooltip">将这个可重载函数作为一个新的事件实现。</Tooltip>
      <Annotation />
      <Credit>CSDN @wb175208</Credit>
    </Page>
  );
}
